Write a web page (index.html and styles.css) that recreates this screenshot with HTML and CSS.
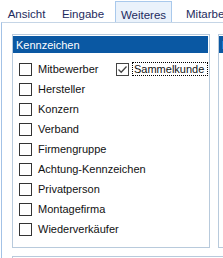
FILE: index.html
```html
<!DOCTYPE html>
<html lang="de">
<head>
    <meta charset="UTF-8">
    <title>Weiteres</title>
    <link rel="stylesheet" href="styles.css">
</head>
<body>
    <div class="tab-control">
        <div class="tabs">
            <div class="tab tab-ansicht">Ansicht</div>
            <div class="tab tab-eingabe">Eingabe</div>
            <div class="tab tab-weiteres active">Weiteres</div>
            <div class="tab tab-mitarbeiter">Mitarbeiter</div>
        </div>

        <div class="tab-page">
            <div class="groups">
                <div class="group">
                    <div class="group-header">Kennzeichen</div>
                    <div class="check-grid">
                        <div class="check-col">
                            <label class="check"><span class="box"></span>Mitbewerber</label>
                            <label class="check"><span class="box"></span>Hersteller</label>
                            <label class="check"><span class="box"></span>Konzern</label>
                            <label class="check"><span class="box"></span>Verband</label>
                            <label class="check"><span class="box"></span>Firmengruppe</label>
                            <label class="check"><span class="box"></span>Achtung-Kennzeichen</label>
                            <label class="check"><span class="box"></span>Privatperson</label>
                            <label class="check"><span class="box"></span>Montagefirma</label>
                            <label class="check"><span class="box"></span>Wiederverkäufer</label>
                        </div>
                        <div class="check-col">
                            <label class="check">
                                <span class="box checked">
                                    <svg width="11" height="11" viewBox="0 0 11 11">
                                        <path d="M1.5 5.5 L4.2 8.2 L9.5 2.5" fill="none" stroke="#444" stroke-width="1.3"/>
                                    </svg>
                                </span>
                                <span class="focus">Sammelkunde</span>
                            </label>
                        </div>
                    </div>
                </div>

                <div class="group group-next">
                    <div class="group-header">F</div>
                </div>
            </div>

            <div class="group-bottom"></div>
        </div>
    </div>
</body>
</html>
```

FILE: styles.css
```css
* {
    margin: 0;
    padding: 0;
    box-sizing: border-box;
}

body {
    font-family: "Liberation Sans", Arial, sans-serif;
    font-size: 11px;
    color: #111;
    background: #fff;
    overflow: hidden;
}

.tab-control {
    margin-left: 1px;
}

.tabs {
    display: flex;
    align-items: flex-end;
    height: 22px;
    padding-left: 1px;
    white-space: nowrap;
}

.tab {
    flex-shrink: 0;
    height: 19px;
    padding-top: 5px;
    color: #1e2b5e;
    text-align: center;
    font-size: 11.5px;
}

.tab-ansicht { width: 49px; }
.tab-eingabe { width: 64px; }
.tab-weiteres { width: 57px; }
.tab-mitarbeiter { padding-left: 14px; text-align: left; }

.tab.active {
    height: 21px;
    padding-top: 7px;
    background: #eaf2fb;
    border: 1px solid #a9c9ec;
    border-bottom: none;
}

.tab-page {
    border-top: 1px solid #c5d5e6;
    border-left: 1px solid #a3c2e6;
    padding: 11px 0 0 10px;
    height: 236px;
}

.groups {
    display: flex;
    gap: 8px;
}

.group {
    width: 198px;
    height: 214px;
    border: 1px solid #b8cadc;
    padding: 1px 1px 0 0;
    flex-shrink: 0;
}

.group-header {
    height: 17px;
    background: #0a58a3;
    color: #fff;
    padding: 3px 0 0 3px;
    line-height: 12px;
    overflow: hidden;
}

.check-grid {
    display: grid;
    grid-template-columns: 97px 1fr;
    padding: 6px 0 0 6px;
}

.check {
    display: flex;
    align-items: center;
    height: 20px;
    white-space: nowrap;
}

.box {
    width: 13px;
    height: 13px;
    border: 1px solid #333;
    margin-right: 6px;
    flex-shrink: 0;
    display: flex;
    align-items: center;
    justify-content: center;
}

.box.checked {
    border-color: #444;
}

.focus {
    outline: 1px dotted #000;
    outline-offset: 0;
    padding: 0 3px 0 1px;
    margin-left: -2px;
    line-height: 12px;
}

.group-next {
    width: 40px;
}

.group-bottom {
    margin-top: 8px;
    height: 10px;
    border: 1px solid #b8cadc;
    border-right: none;
}
```
